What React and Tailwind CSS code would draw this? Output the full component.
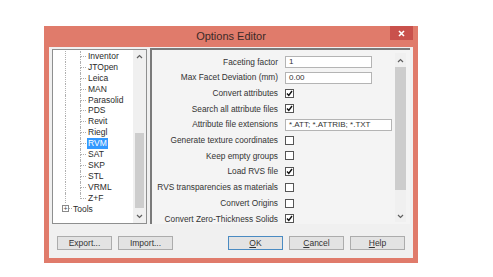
import React from "react";

const Up = () => (
  <svg width="7" height="5" viewBox="0 0 7 5"><polyline points="1,4 3.5,1.5 6,4" fill="none" stroke="#606060" strokeWidth="1.2" /></svg>
);
const Down = () => (
  <svg width="7" height="5" viewBox="0 0 7 5"><polyline points="1,1 3.5,3.5 6,1" fill="none" stroke="#606060" strokeWidth="1.2" /></svg>
);

const treeItems = ["Inventor", "JTOpen", "Leica", "MAN", "Parasolid", "PDS", "Revit", "Riegl", "RVM", "SAT", "SKP", "STL", "VRML", "Z+F"];

function TreeRow({ label, last }) {
  const sel = label === "RVM";
  return (
    <div className="flex h-[10.9px] items-stretch">
      <div className="w-[12px]" />
      <div className="w-[15px] border-l border-dotted border-[#b0b0b0]" />
      <div className="w-[6px] flex flex-col">
        <div className="flex-1 border-l border-b border-dotted border-[#b0b0b0]" />
        <div className={"flex-1 " + (last ? "" : "border-l border-dotted border-[#b0b0b0]")} />
      </div>
      <span className={"ml-[1px] px-[1px] leading-[10.9px] " + (sel ? "bg-[#3399ff] text-white" : "text-[#2a2a2a]")}>{label}</span>
    </div>
  );
}

const rows = [
  { label: "Faceting factor", type: "input", value: "1", w: "w-[87px]" },
  { label: "Max Facet Deviation (mm)", type: "input", value: "0.00", w: "w-[87px]" },
  { label: "Convert attributes", type: "check", on: true },
  { label: "Search all attribute files", type: "check", on: true },
  { label: "Attribute file extensions", type: "input", value: "*.ATT; *.ATTRIB; *.TXT", w: "w-[107px]" },
  { label: "Generate texture coordinates", type: "check", on: false },
  { label: "Keep empty groups", type: "check", on: false },
  { label: "Load RVS file", type: "check", on: true },
  { label: "RVS transparencies as materials", type: "check", on: false },
  { label: "Convert Origins", type: "check", on: false },
  { label: "Convert Zero-Thickness Solids", type: "check", on: true },
];

function Check({ on }) {
  return (
    <div className="w-[9px] h-[9px] border border-[#555] bg-white flex items-center justify-center">
      {on && (
        <svg width="7" height="7" viewBox="0 0 7 7"><polyline points="1,3.5 2.8,5.5 6,1" fill="none" stroke="#111" strokeWidth="1.4" /></svg>
      )}
    </div>
  );
}

function Btn({ children, primary }) {
  return (
    <div className={"w-[55px] h-[14px] flex items-center justify-center bg-[#e3e3e3] border text-[8.5px] text-[#333] " + (primary ? "border-[#4a8bc2]" : "border-[#acacac]")}>
      {children}
    </div>
  );
}

export default function App() {
  return (
    <div className="w-[493px] h-[277px] bg-white pl-[44px] pt-[26px] font-['Liberation_Sans',Arial,sans-serif]">
      <div className="w-[374px] h-[237px] bg-[#e07b6b] flex flex-col">
        <div className="h-[21px] flex items-start relative">
          <div className="flex-1 h-full flex items-center justify-center text-[11px] text-[#3a2a28]">Options Editor</div>
          <div className="absolute right-[5px] top-0 w-[23px] h-[14px] bg-[#c9514c] flex items-center justify-center">
            <svg width="7" height="7" viewBox="0 0 7 7"><path d="M1 1L6 6M6 1L1 6" stroke="white" strokeWidth="1.6" /></svg>
          </div>
        </div>
        <div className="mx-[5px] mb-[5px] flex-1 bg-[#f0f0f0] flex flex-col px-[3px] pt-[1px]">
          <div className="flex gap-[3px] h-[176px]">
            <div className="w-[95px] mt-[1px] border border-[#8e8f8f] bg-white flex text-[8.5px]">
              <div className="flex-1 pt-[1px] overflow-hidden">
                {treeItems.map((t, i) => (
                  <TreeRow key={t} label={t} last={i === treeItems.length - 1} />
                ))}
                <div className="flex h-[10.9px] items-center">
                  <div className="w-[9px]" />
                  <div className="w-[7px] h-[7px] border border-[#8a8a8a] flex items-center justify-center">
                    <span className="text-[7px] leading-none text-[#444]">+</span>
                  </div>
                  <div className="w-[3px] border-t border-dotted border-[#b0b0b0]" />
                  <span className="ml-[1px] text-[#2a2a2a]">Tools</span>
                </div>
              </div>
              <div className="w-[13px] bg-[#f0f0f0] flex flex-col items-center">
                <div className="h-[9px] flex items-end justify-center"><Up /></div>
                <div className="flex-1 w-full flex flex-col pt-[74px] pb-[6px] px-[2px]">
                  <div className="flex-1 bg-[#cdcdcd]" />
                </div>
                <div className="h-[9px] flex items-start justify-center"><Down /></div>
              </div>
            </div>
            <div className="flex-1 border-t-2 border-l-2 border-[#7a7a7a] bg-[#f4f4f4] flex">
              <div className="flex-1 pt-[4px] text-[8.3px] text-[#333]">
                {rows.map((r) => (
                  <div key={r.label} className="h-[15.7px] grid grid-cols-[126px_1fr] gap-x-[7px] items-center">
                    <div className="text-right whitespace-nowrap">{r.label}</div>
                    <div className="flex items-center">
                      {r.type === "input" ? (
                        <div className={r.w + " h-[12px] bg-white border border-[#b4b4b4] pl-[3px] flex items-center text-[8px]"}>{r.value}</div>
                      ) : (
                        <Check on={r.on} />
                      )}
                    </div>
                  </div>
                ))}
              </div>
              <div className="w-[11px] mr-[4px] mt-[3px] mb-[2px] flex flex-col items-center bg-[#f0f0f0]">
                <div className="h-[14px] flex items-center justify-center"><Up /></div>
                <div className="w-full h-[123px] bg-[#cdcdcd]" />
                <div className="flex-1" />
                <div className="h-[12px] flex items-center justify-center"><Down /></div>
              </div>
            </div>
          </div>
          <div className="mt-[12px] px-[5px] flex justify-between">
            <div className="flex gap-[6px]">
              <Btn>Export...</Btn>
              <Btn>Import...</Btn>
            </div>
            <div className="flex gap-[6px]">
              <Btn primary><span className="underline">O</span>K</Btn>
              <Btn><span className="underline">C</span>ancel</Btn>
              <Btn><span className="underline">H</span>elp</Btn>
            </div>
          </div>
        </div>
      </div>
    </div>
  );
}
